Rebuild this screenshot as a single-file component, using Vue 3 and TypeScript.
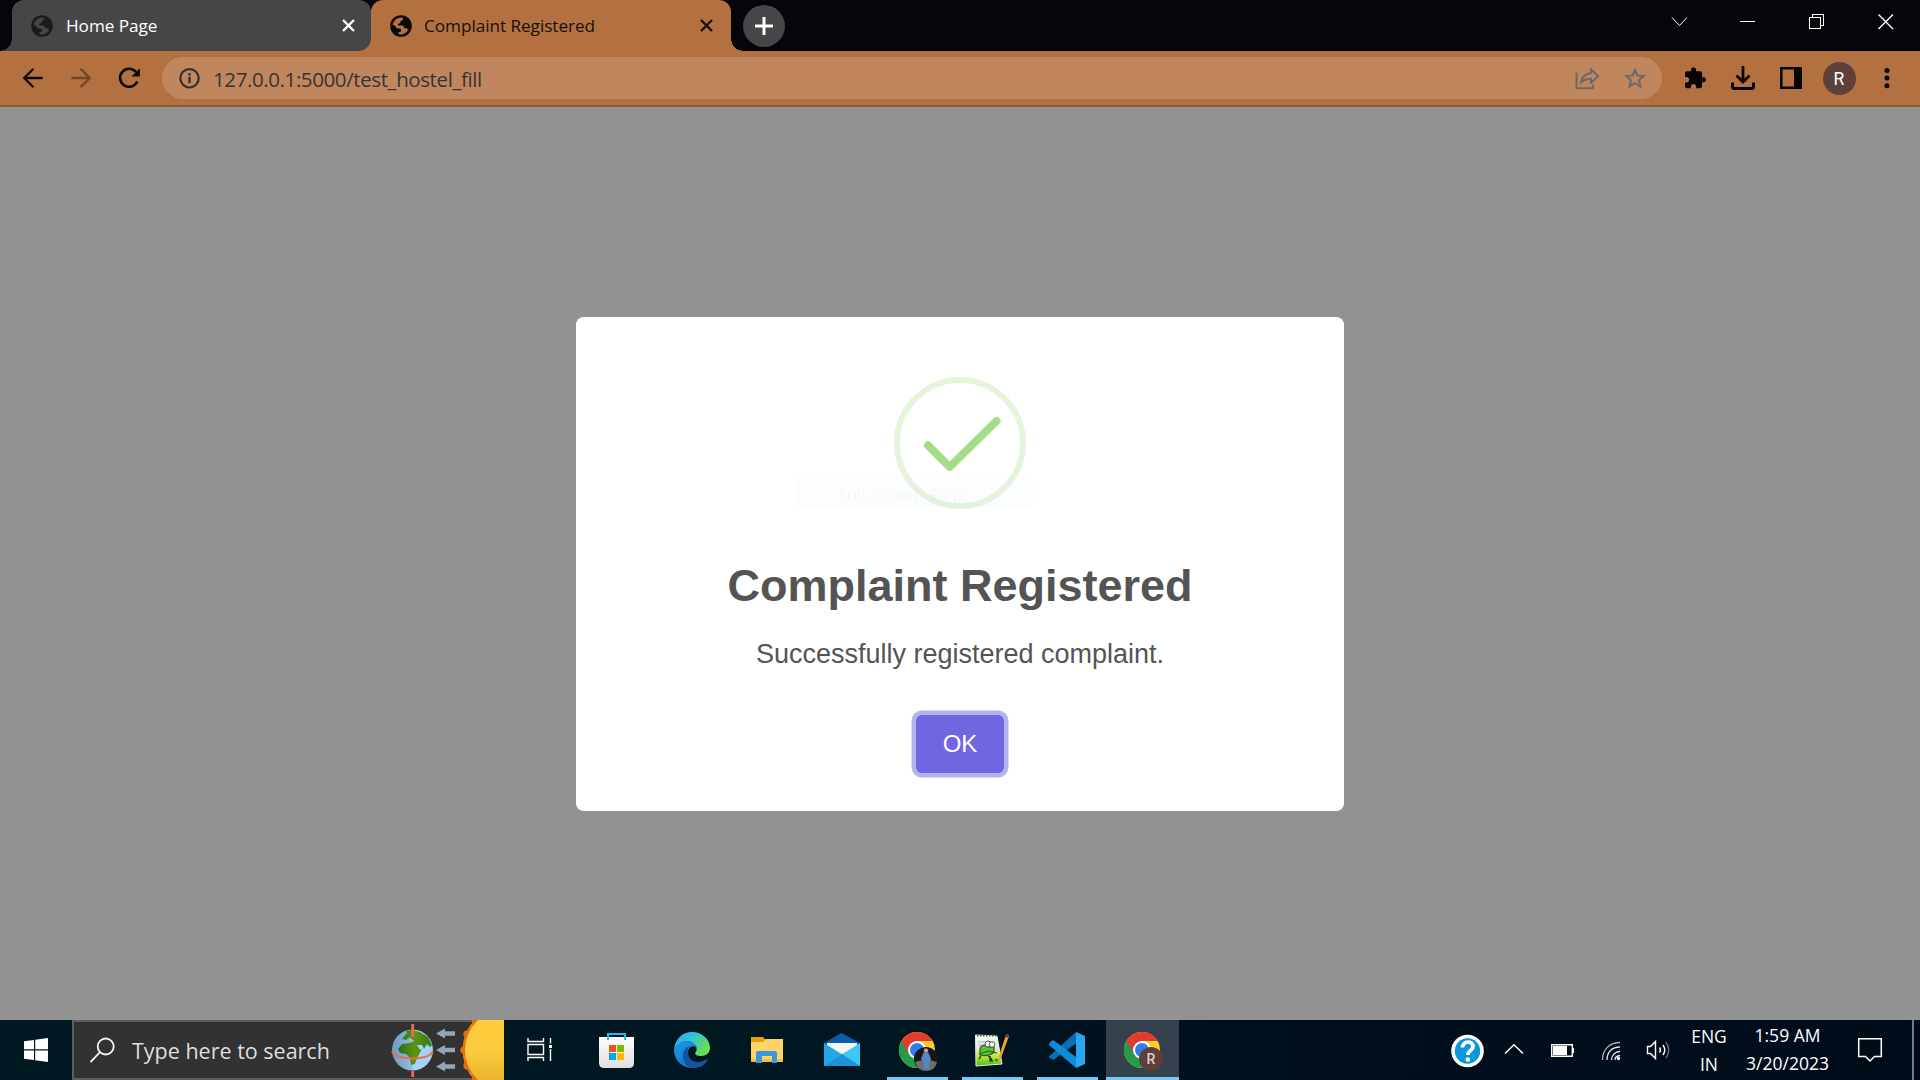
<script setup lang="ts">
interface Tab {
  title: string
  active: boolean
}

const tabs: Tab[] = [
  { title: 'Home Page', active: false },
  { title: 'Complaint Registered', active: true },
]
const address = '127.0.0.1:5000/test_hostel_fill'
const sunRays: number[] = [-66, -44, -22, 0, 22, 44, 66]
const arrowRows: number[] = [13.5, 30, 46.5]
</script>

<template>
  <div class="desktop">
    <header class="tabstrip">
      <div v-for="tab in tabs" :key="tab.title" class="tab" :class="{ active: tab.active }">
        <svg class="favicon" width="22" height="22" viewBox="0 0 22 22">
          <circle class="globe" cx="11" cy="11" r="10.8" />
          <path class="land" d="M2.6 9.6C3.4 5.8 6.8 2.8 10.8 2.5L13 3C13 5.1 12.3 5.9 10.6 6.1L10.2 7.9 8 8.9 8 10.4H12.2C13.3 10.4 14 11.2 14 12.2V13.2H16C17 13.2 17.8 13.8 18 15C16.5 17.9 13.9 19.4 11 19.5L8.4 19.1V17.4L11.1 16.4 11 14.6C10.9 13.9 10 13.6 8.8 13.6C7 13.6 6 12.7 5.7 11.4Z" />
        </svg>
        <span class="tab-title">{{ tab.title }}</span>
        <svg class="tab-close" width="13" height="13" viewBox="0 0 13 13"><path d="M1 1 12 12M12 1 1 12" /></svg>
      </div>
      <button class="newtab">
        <svg width="18" height="18" viewBox="0 0 18 18"><path d="M9 0V18M0 9H18" stroke="#fff" stroke-width="3" /></svg>
      </button>
      <div class="window-controls">
        <svg width="69" height="51" viewBox="0 0 69 51"><path d="M28 17.5 35.5 25.5 43 17.5" /></svg>
        <svg width="69" height="51" viewBox="0 0 69 51" shape-rendering="crispEdges"><path d="M27 21.5H42" /></svg>
        <svg width="69" height="51" viewBox="0 0 69 51" shape-rendering="crispEdges"><path d="M27.5 17.5H38.5V28.5H27.5ZM30.5 17V14.5H41.5V25.5H39" /></svg>
        <svg width="69" height="51" viewBox="0 0 69 51"><path d="M27.5 14.5 42 29M42 14.5 27.5 29" stroke-width="1.4" /></svg>
      </div>
    </header>

    <nav class="toolbar">
      <svg width="48" height="54" viewBox="0 0 48 54" fill="none" stroke="#0d0906" stroke-width="2.3"><path d="M33.5 27H15.5M24.5 17.8 15.2 27 24.5 36.2" /></svg>
      <svg width="48" height="54" viewBox="0 0 48 54" fill="none" stroke="#6f4629" stroke-width="2.3"><path d="M14.5 27H32.5M23.5 17.8 32.8 27 23.5 36.2" /></svg>
      <svg width="48" height="54" viewBox="0 0 48 54">
        <path d="M32.3 30.5A9 9 0 1 1 31 21" fill="none" stroke="#0d0906" stroke-width="2.6" />
        <path d="M34.9 17.3V25.4H26.4Z" fill="#0d0906" />
      </svg>
      <div class="omnibox">
        <svg class="info" width="22" height="22" viewBox="0 0 22 22">
          <circle cx="11.5" cy="11.3" r="9.2" fill="none" stroke="#332f31" stroke-width="2.2" />
          <path d="M11.5 9.8V16.3M11.5 6.1V8.4" stroke="#332f31" stroke-width="2.3" />
        </svg>
        <span class="address">{{ address }}</span>
        <svg class="share" width="48" height="42" viewBox="0 0 48 42" fill="none" stroke="#6d6866" stroke-width="2">
          <path d="M13.5 15.500V31.200H30V27.500" />
          <path d="M18 25.5C19 19.5 22.5 16.7 28 16V12.300L35 19.200 28 25.700V21.700C23.500 21.700 20.500 23 18 25.500Z" />
        </svg>
        <svg width="48" height="42" viewBox="0 0 48 42" fill="none" stroke="#6d6866" stroke-width="2">
          <path d="M24 12.900 26.400 18.500 32.700 19.100 28 23.200 29.400 29.500 24 26.200 18.600 29.500 20 23.200 15.300 19.100 21.600 18.500Z" />
        </svg>
      </div>
      <svg class="first-action" width="48" height="54" viewBox="0 0 48 54">
        <path transform="translate(12 15.2)" fill="#070504" d="M20.5 11H19V7c0-1.1-.9-2-2-2h-4V3.5C13 2.12 11.88 1 10.5 1S8 2.12 8 3.5V5H4c-1.1 0-1.99.9-1.99 2v3.8H3.5c1.49 0 2.7 1.21 2.7 2.7s-1.21 2.7-2.7 2.7H2V20c0 1.1.9 2 2 2h3.8v-1.5c0-1.49 1.21-2.7 2.7-2.7s2.7 1.21 2.7 2.7V22H17c1.1 0 2-.9 2-2v-4h1.5c1.38 0 2.5-1.12 2.5-2.5S21.88 11 20.5 11z" />
      </svg>
      <svg width="48" height="54" viewBox="0 0 48 54" fill="none" stroke="#070504" stroke-width="3">
        <path d="M24 15V31M17.5 24.5 24 31 30.5 24.5" stroke-width="2.8" />
        <path d="M13.5 31.5V35.5Q13.5 37.5 15.5 37.5H32.5Q34.5 37.5 34.5 35.5V31.5" />
      </svg>
      <svg width="48" height="54" viewBox="0 0 48 54">
        <path d="M14.3 17.3H33.7V36.7H14.3Z" fill="none" stroke="#070504" stroke-width="2.6" />
        <path d="M27 16H35V38H27Z" fill="#070504" />
      </svg>
      <div class="avatar-slot"><span class="avatar">R</span></div>
      <svg width="48" height="54" viewBox="0 0 48 54" fill="#070504">
        <circle cx="24" cy="19.5" r="2.5" /><circle cx="24" cy="27" r="2.5" /><circle cx="24" cy="34.7" r="2.5" />
      </svg>
    </nav>

    <main class="page">
      <section class="modal">
        <svg class="success" width="132" height="132" viewBox="0 0 132 132" fill="none">
          <circle cx="66" cy="66" r="63" stroke="#e4f5db" stroke-width="6" />
          <path d="M34 68.3 55.7 90 102.5 44" stroke="#a5dc86" stroke-width="8" stroke-linecap="round" stroke-linejoin="round" />
        </svg>
        <h1>Complaint Registered</h1>
        <p>Successfully registered complaint.</p>
        <button class="confirm">OK</button>
        <div class="snip-hint">Full-screen Snip</div>
      </section>
    </main>

    <footer class="taskbar">
      <svg width="72" height="60" viewBox="0 0 72 60" fill="#fff">
        <path d="M24 21.3 34 20V29.3H24ZM35.2 19.8 48 18V29.3H35.2ZM24 30.5H34V40L24 38.7ZM35.2 30.5H48V42L35.2 40.2Z" />
      </svg>
      <div class="search">
        <svg class="lens" width="26" height="26" viewBox="0 0 26 26" fill="none" stroke="#f2f2f2" stroke-width="1.8">
          <circle cx="15.7" cy="9.5" r="8" /><path d="M10 15.2.5 25" />
        </svg>
        <span class="search-text">Type here to search</span>
        <svg class="equinox" width="114" height="60" viewBox="0 0 114 60">
          <defs>
            <linearGradient id="sea" x1="0" y1="0" x2="1" y2="0"><stop offset="0" stop-color="#6d9abd" /><stop offset=".48" stop-color="#8fbce0" /><stop offset=".52" stop-color="#a9d4fa" /><stop offset="1" stop-color="#9fd0fb" /></linearGradient>
            <linearGradient id="sun" x1="0" y1="0" x2="0" y2="1"><stop offset="0" stop-color="#ffcc3c" /><stop offset=".5" stop-color="#fccb3e" /><stop offset="1" stop-color="#e3ad27" /></linearGradient>
            <linearGradient id="forest" x1="0" y1="0" x2="1" y2="0"><stop offset="0" stop-color="#286e1d" /><stop offset=".5" stop-color="#5f9412" /><stop offset="1" stop-color="#2f7817" /></linearGradient>
          </defs>
          <circle cx="22.5" cy="30" r="20.5" fill="url(#sea)" />
          <path fill="url(#forest)" d="M12 19 17 13 16 11 22 10 30 12 38 17 42 25 40 27 37 24 34 29 32 25 27 25 30 30 32 29 27 38 25 44 21 45 20 38 16 34 10 33 8 29 12 24 20 23 24 21 20 17 16 20Z" />
          <path d="M2.2 31C4 41 41 41 42.8 31" fill="none" stroke="#f0694c" stroke-width="1.9" />
          <path d="M22.7 4V17M22.7 51V57" stroke="#f46852" stroke-width="2.7" />
          <path v-for="y in arrowRows" :key="y" :transform="`translate(46 ${y})`" d="M0 0 9-5V-2.2H19V2.2H9V5Z" fill="#91a4b9" />
          <circle cx="116" cy="30" r="43.5" fill="#ed8417" />
          <g v-for="angle in sunRays" :key="angle" :transform="`rotate(${angle} 116 30)`">
            <path d="M76 21Q74 26 71.500 27Q69 30 71.500 33Q74 34 76 39Z" fill="#e2700e" />
          </g>
          <circle cx="116" cy="30" r="41" fill="url(#sun)" />
        </svg>
      </div>

      <svg class="task" viewBox="0 0 75 60" fill="none" stroke="#fff" stroke-width="1.4">
        <path d="M24 18V21.5H39.5V18M24 24.5H39.5V34.5H24ZM24 41V37.5H39.5V41M46.5 18V23.5M46.5 29V41" />
        <path d="M45 25H48V28H45Z" fill="#fff" stroke="none" />
      </svg>
      <svg class="task" viewBox="0 0 75 60">
        <defs><linearGradient id="bag" x1="0" y1="0" x2="0" y2="1"><stop offset="0" stop-color="#fff" /><stop offset="1" stop-color="#dedede" /></linearGradient></defs>
        <path d="M20 17H55V43Q55 48 50 48H25Q20 48 20 43Z" fill="url(#bag)" />
        <path d="M29 20V14H46V20" fill="none" stroke="#28b6ed" stroke-width="2" />
        <path d="M30 25H37V32H30Z" fill="#f1511b" /><path d="M38 25H45V32H38Z" fill="#80bb01" />
        <path d="M30 33H37V40H30Z" fill="#00a6ee" /><path d="M38 33H45V40H38Z" fill="#fbb902" />
      </svg>
      <svg class="task" viewBox="0 0 75 60">
        <defs>
          <linearGradient id="edge-top" x1="0" y1="0" x2="1" y2=".5"><stop offset="0" stop-color="#2f9fe0" /><stop offset=".5" stop-color="#32c5d4" /><stop offset="1" stop-color="#66e04e" /></linearGradient>
          <linearGradient id="edge-side" x1="0" y1="0" x2=".8" y2="1"><stop offset="0" stop-color="#2198e6" /><stop offset="1" stop-color="#0b70c4" /></linearGradient>
        </defs>
        <path d="M20 30C21 19 28 12 38 12C48 12 56 19 56 28C56 33 52 36 47 36C43 36 41 35 41 33C43 31 43 29 42 26C36 18 26 20 20 30Z" fill="url(#edge-top)" />
        <path d="M20 30C22 24 27 21 33 21C38 21 42 24 43 28C39 24 34 27 34 33C34 42 40 46 49 44C45 47 42 48 38 48C28 48 20 40 20 30Z" fill="url(#edge-side)" />
        <path d="M36 26C32 29 33 42 44 42C48 42 50 40 53 39C54 39 54 40 53 41C50 46 45 48 40 48C31 48 29 40 29 36C29 31 32 27 36 26Z" fill="#1254a0" />
      </svg>
      <svg class="task" viewBox="0 0 75 60">
        <path d="M22 17H34L37 20V24H22Z" fill="#e5a106" />
        <path d="M22 22H34L37 19H54V42H22Z" fill="#fdd465" />
        <path d="M22 39H54V42H22Z" fill="#f5bd3c" />
        <path d="M27 43V33Q27 31 29 31H46Q48 31 48 33V43H43V36H33V43Z" fill="#3c96dc" />
      </svg>
      <svg class="task" viewBox="0 0 75 60">
        <path d="M20 23 37.5 13 56 23V46H20Z" fill="#0b5cab" />
        <path d="M23 23H53V26L38 34.5 23 26Z" fill="#f4f4f4" />
        <path d="M20 23 56 46H20Z" fill="#23a6ea" />
        <path d="M56 23 38 34.5 56 46Z" fill="#3cc8f5" /><path d="M38 34.5 56 46H20Z" fill="#1b93dc" />
      </svg>
      <svg class="task" viewBox="0 0 75 60">
        <g id="chrome-mark">
          <circle cx="38" cy="30" r="18" fill="#ffcb32" />
          <path d="M38 30 22.4 21A18 18 0 0 0 38 48L46 34.5Z" fill="#249a4b" />
          <path d="M38 30 30.2 34.5 22.4 21A18 18 0 0 1 53.6 21H38Z" fill="#e33b30" />
          <circle cx="38" cy="30" r="9" fill="#fff" /><circle cx="38" cy="30" r="7" fill="#2f7de9" />
        </g>
        <circle cx="47" cy="39" r="12" fill="#171719" />
        <path d="M36 42Q47 38 58 42Q56 51 47 51Q39 51 36 42Z" fill="#706f68" />
        <path d="M44.500 32.500H49.500L52 39 50.500 42 50 49H45L44.500 42 42 39Z" fill="#5688c8" /><circle cx="47" cy="30.500" r="2.200" fill="#bf9b8b" />
        <path d="M8 57H69V60H8Z" fill="#76c9f5" />
      </svg>
      <svg class="task" viewBox="0 0 75 60">
        <defs><linearGradient id="note" x1="0" y1="0" x2="0" y2="1"><stop offset="0" stop-color="#f5f9f4" /><stop offset=".4" stop-color="#e4edd9" /><stop offset=".7" stop-color="#bce63a" /><stop offset="1" stop-color="#47b81f" /></linearGradient></defs>
        <path d="M21.5 15 43 16 48 44 22 46Z" fill="url(#note)" stroke="#e8eee8" />
        <path d="M23 15.5H43" stroke="#555" stroke-width="2" stroke-dasharray="1.5 1.5" />
        <path d="M24 22H35M24 25H33" stroke="#adb9cf" />
        <path d="M26 30C26 25 31 24 34 27L40 27V32C36 36 30 36 26 35ZM25 34 35 31 43 33" fill="#55c62f" stroke="#35592c" stroke-width="1.2" />
        <circle cx="34" cy="24" r="3" fill="#f8f8f8" stroke="#555" /><circle cx="38" cy="24.5" r="2.8" fill="#f8f8f8" stroke="#555" />
        <path d="M27 36 25 39M34 36 38 39M36 36V41H39M41 40H44" stroke="#29521d" stroke-width="1.5" />
        <path d="M44 39 52 15 55 16 47 38 43 41Z" fill="#f0a52a" /><path d="M52.5 13.5 55 14.5 54 18 51.5 17Z" fill="#913230" />
        <path d="M8 57H69V60H8Z" fill="#76c9f5" />
      </svg>
      <svg class="task" viewBox="0 0 75 60">
        <path d="M20 36.5 47 12V23.5L25 39.5H23L20 37.5Z" fill="#0871b5" />
        <path d="M20 23.500 23 20.500H25L47 37V48L20 25Z" fill="#108bd5" />
        <path d="M47 12 56 16V44L47 48Z" fill="#2aa5ef" />
        <path d="M8 57H69V60H8Z" fill="#76c9f5" />
      </svg>
      <div class="current">
        <svg class="task" viewBox="0 0 75 60">
          <path d="M2 0H75V57H2Z" fill="#33424d" />
          <use href="#chrome-mark" />
          <circle cx="47" cy="39" r="12" fill="#5d4037" />
          <text x="47" y="44" text-anchor="middle" class="badge-letter">R</text>
          <path d="M2 57H75V60H2Z" fill="#76c9f5" />
        </svg>
      </div>

      <div class="tray">
        <svg width="50" height="60" viewBox="0 0 50 60">
          <circle cx="25.5" cy="31" r="16.3" fill="#fff" /><circle cx="25.5" cy="31" r="12.7" fill="#0a96da" />
          <path d="M20.5 27.5C20.5 20.5 31 20.5 31 26.5C31 30.5 25.8 30.5 25.8 35" fill="none" stroke="#fff" stroke-width="3.8" /><circle cx="25.8" cy="39.5" r="2.3" fill="#fff" />
        </svg>
        <svg width="46" height="60" viewBox="0 0 46 60" fill="none" stroke="#fff" stroke-width="1.5"><path d="M13 33.5 22 24.8 31 33.5" /></svg>
        <svg width="48" height="60" viewBox="0 0 48 60">
          <path d="M13.7 24.7H34.3V36.3H13.7Z" fill="none" stroke="#fff" stroke-width="1.4" /><path d="M15 26H29V35H15ZM35 28H36V33H35Z" fill="#fff" />
        </svg>
        <svg width="46" height="60" viewBox="0 0 46 60" fill="none" stroke-width="1.3">
          <path d="M16.5 40C16.5 29 24 22.5 34 22.5" stroke="#aeb2b8" />
          <path d="M21 40C21 32 26 27 34 27M25.5 40C25.5 35 29 31.5 34 31.5M29 40Q29 36 34 35.5" stroke="#e5e7e9" /><circle cx="32.5" cy="38.5" r="1.7" fill="#fff" />
        </svg>
        <svg width="46" height="60" viewBox="0 0 46 60" fill="none" stroke="#fff" stroke-width="1.4">
          <path d="M15.5 26.5H18.5L23.5 21.5V38.5L18.5 33.5H15.5ZM27.5 27.5Q29.5 30 27.5 32.5M31 25Q34.5 30 31 35" /><path d="M34 22Q39.5 30 34 38" stroke="#68707a" />
        </svg>
        <div class="language"><span>ENG</span><span>IN</span></div>
        <div class="clock"><span>1:59 AM</span><span>3/20/2023</span></div>
        <svg width="73" height="60" viewBox="0 0 73 60" fill="none" stroke="#fff" stroke-width="1.5"><path d="M19.7 18.7H42.3V36.5H35.5L31 41 26.5 36.5H19.7Z" /></svg>
        <div class="show-desktop"></div>
      </div>
    </footer>
  </div>
</template>

<style>
body { margin: 0; overflow: hidden; }
</style>

<style scoped>
.desktop { width: 1920px; height: 1080px; display: flex; flex-direction: column; overflow: hidden; font-family: "Open Sans", "Noto Sans", sans-serif; }
svg { display: block; flex: none; }
button { border: 0; padding: 0; }
.tabstrip { height: 51px; background: #040609; display: flex; padding-left: 12px; flex: none; }
.tab { position: relative; box-sizing: border-box; width: 359px; height: 51px; padding: 0 16px 0 19px; border-radius: 12px 12px 0 0; background: #464648; color: #fff; display: flex; align-items: center; }
.tab::before { content: ""; position: absolute; left: -12px; bottom: 0; width: 12px; height: 12px; background: radial-gradient(circle at 0 0, transparent 11.5px, #464648 12px); }
.tab.active { width: 360px; padding: 0 18px 0 19px; background: #b37041; color: #17100b; }
.tab.active::before { background: radial-gradient(circle at 0 0, transparent 11.5px, #b37041 12px); }
.tab.active::after { content: ""; position: absolute; right: -12px; bottom: 0; width: 12px; height: 12px; background: radial-gradient(circle at 100% 0, transparent 11.5px, #b37041 12px); }
.favicon { margin-right: 13px; }
.globe { fill: #1b1b1c; }
.land { fill: #464648; }
.active .globe { fill: #0b0908; }
.active .land { fill: #b37041; }
.tab-title { flex: 1; font-size: 17.2px; line-height: 24px; letter-spacing: -0.05px; white-space: nowrap; }
.active .tab-title { margin-left: -1px; }
.tab-close { fill: none; stroke: currentColor; stroke-width: 2.4; }
.newtab { width: 42px; height: 42px; margin: 4.5px 0 0 11.5px; border-radius: 50%; background: #464648; display: flex; align-items: center; justify-content: center; }
.window-controls { display: flex; margin-left: auto; fill: none; stroke: #fff; stroke-width: 1; }
.toolbar { height: 56px; box-sizing: border-box; padding: 0 9px; background: #b37041; border-bottom: 2px solid #8c5733; display: flex; flex: none; }
.omnibox { width: 1500px; height: 42px; margin: 6px 0 0 9px; box-sizing: border-box; border-radius: 21px; background: #c0875f; display: flex; align-items: center; padding: 0 3px 0 16px; }
.info { margin-right: 13px; }
.address { position: relative; top: 1px; font-size: 20.5px; line-height: 28px; color: #373335; letter-spacing: -0.4px; white-space: nowrap; }
.share { margin-left: auto; }
.first-action { margin-left: 9px; }
.avatar-slot { width: 48px; height: 54px; display: flex; align-items: center; justify-content: center; }
.avatar { width: 33px; height: 33px; margin-top: 1px; border-radius: 50%; background: #5d4037; color: #fff; font: 17.5px/34px Roboto, sans-serif; text-align: center; }
.page { flex: 1; background: #929292; display: flex; justify-content: center; align-items: flex-start; }
.modal { position: relative; width: 768px; height: 494px; margin-top: 210px; border-radius: 7.5px; background: #fff; display: flex; flex-direction: column; align-items: center; color: #545454; font-family: "Liberation Sans", Arial, sans-serif; }
.success { margin-top: 60px; }
h1 { margin: 51px 0 0; font-size: 45px; line-height: 52px; font-weight: 700; }
p { margin: 27px 0 0; font-size: 27px; line-height: 31px; }
.confirm { width: 88px; height: 58px; margin-top: 45px; border-radius: 6px; background: #7066e0; box-shadow: 0 0 0 4.5px rgba(112, 102, 224, .5); color: #fff; font: 24px/58px "Liberation Sans", Arial, sans-serif; }
.snip-hint { position: absolute; left: 221px; top: 161px; width: 236px; height: 30px; box-sizing: border-box; padding-left: 41px; background: rgba(215, 235, 255, .1); color: rgba(80, 70, 70, .05); font: 17px/33px "Open Sans", sans-serif; white-space: nowrap; }
.taskbar { height: 60px; flex: none; display: flex; background: linear-gradient(90deg, #011923 0%, #001722 45%, #00101c 62%, #000b1a 100%); color: #fff; }
.search { width: 432px; box-sizing: border-box; display: flex; align-items: center; background: linear-gradient(#5d5d5d 0 2px, #323232 2px 58px, #5d5d5d 58px); border-left: 2px solid #5d5d5d; padding-left: 16px; }
.search-text { margin: 2px 0 0 16px; font-size: 21.5px; line-height: 30px; color: #dedede; white-space: nowrap; }
.equinox { margin-left: auto; }
.task { width: 75px; height: 60px; }
.badge-letter { fill: #d9d2cf; font: 500 14px Roboto, sans-serif; }
.tray { margin-left: auto; display: flex; }
.language, .clock { display: flex; flex-direction: column; align-items: center; padding-top: 3px; font-size: 17.5px; line-height: 27.5px; white-space: nowrap; }
.language { width: 54px; margin-left: 4px; }
.clock { width: 103px; padding-top: 2px; }
.show-desktop { width: 6px; border-left: 2px solid #747982; }
</style>
